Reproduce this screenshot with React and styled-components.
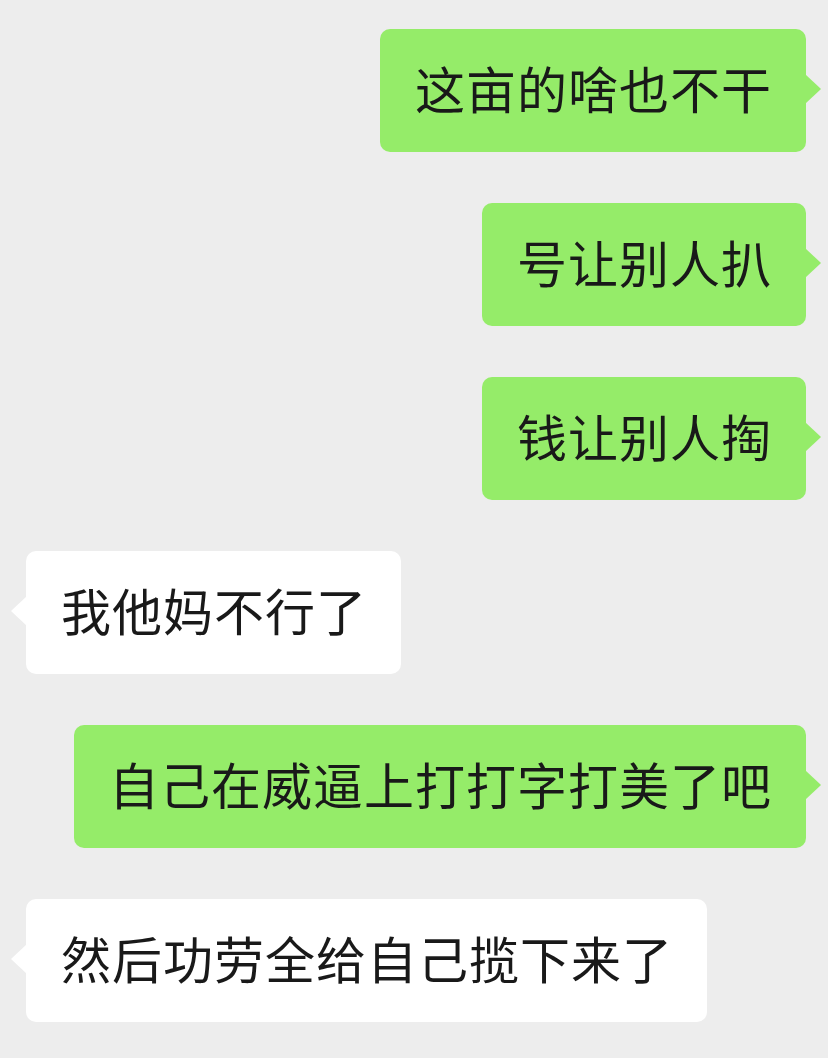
import React from 'react';
import styled, { createGlobalStyle, css } from 'styled-components';

const GlobalStyle = createGlobalStyle`
  html, body {
    margin: 0;
    padding: 0;
    background: #ededed;
  }
`;

const COLOR = {
  bg: '#ededed',
  mine: '#95ec69',
  theirs: '#ffffff',
  text: '#191919',
};

const Chat = styled.div`
  width: 828px;
  height: 1058px;
  box-sizing: border-box;
  padding: 29px 22px 0 26px;
  display: flex;
  flex-direction: column;
  gap: 51px;
  background: ${COLOR.bg};
  overflow: hidden;
`;

const Row = styled.div`
  display: flex;
  justify-content: ${(p) => (p.$mine ? 'flex-end' : 'flex-start')};
`;

const Bubble = styled.div`
  position: relative;
  height: 123px;
  box-sizing: border-box;
  padding: 0 34px 8px 35px;
  display: flex;
  align-items: center;
  border-radius: 10px;
  background: ${(p) => (p.$mine ? COLOR.mine : COLOR.theirs)};
  color: ${COLOR.text};
  font-family: 'Noto Sans CJK SC', 'Noto Sans', sans-serif;
  font-size: 50px;
  letter-spacing: 1px;
  line-height: 1;
  white-space: nowrap;

  &::after {
    content: '';
    position: absolute;
    top: 45px;
    width: 0;
    height: 0;
    border-top: 15px solid transparent;
    border-bottom: 15px solid transparent;
    ${(p) =>
      p.$mine
        ? css`
            right: -15px;
            border-left: 16px solid ${COLOR.mine};
          `
        : css`
            left: -15px;
            border-right: 16px solid ${COLOR.theirs};
          `}
  }
`;

const messages = [
  { mine: true, text: '这亩的啥也不干' },
  { mine: true, text: '号让别人扒' },
  { mine: true, text: '钱让别人掏' },
  { mine: false, text: '我他妈不行了' },
  { mine: true, text: '自己在威逼上打打字打美了吧' },
  { mine: false, text: '然后功劳全给自己揽下来了' },
];

const App = () => (
  <>
    <GlobalStyle />
    <Chat>
      {messages.map((m, idx) => (
        <Row key={idx} $mine={m.mine}>
          <Bubble $mine={m.mine}>{m.text}</Bubble>
        </Row>
      ))}
    </Chat>
  </>
);

export default App;
